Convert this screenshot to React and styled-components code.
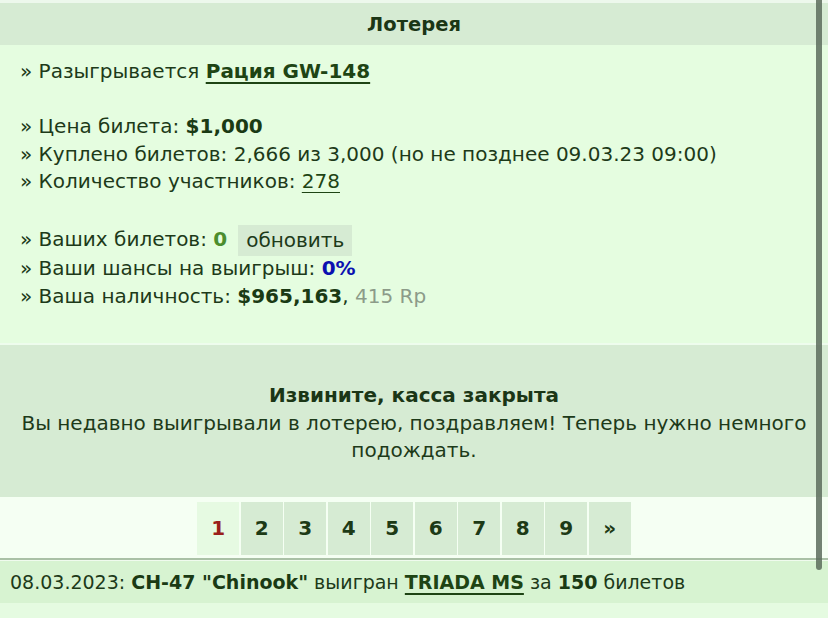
import React from "react";
import styled, { createGlobalStyle } from "styled-components";

const Global = createGlobalStyle`
  html, body { margin: 0; padding: 0; }
  body {
    background: #e5fbe1;
    font-family: "DejaVu Sans", Verdana, sans-serif;
    font-size: 20px;
    color: #1d3a19;
    overflow: hidden;
  }
`;

const Page = styled.div`
  width: 828px;
  height: 618px;
  padding-top: 3px;
  box-sizing: border-box;
  background: #edf8ec;
  position: relative;
`;

const Header = styled.div`
  height: 42px;
  background: #d6ebd3;
  display: flex;
  align-items: center;
  justify-content: center;
  font-weight: bold;
  font-size: 19.5px;
  color: #1b3616;
`;

const Body = styled.div`
  background: #e5fde0;
  padding: 13px 20px 33px;
  line-height: 27.5px;
  border-bottom: 2px solid #eefced;
`;

const Row = styled.div`
  white-space: nowrap;
`;

const RowTall = styled(Row)`
  height: 32px;
  line-height: 32px;
`;

const Gap = styled.div`
  height: 27.5px;
`;

const Strong = styled.b`
  color: ${(p) => p.$c || "#1a3a14"};
`;

const Link = styled.a`
  color: #1e4414;
  font-weight: ${(p) => (p.$bold ? "bold" : "normal")};
  text-decoration: underline;
  text-decoration-thickness: ${(p) => (p.$bold ? "2px" : "1px")};
  text-underline-offset: 4px;
  cursor: pointer;
`;

const Muted = styled.span`
  color: #8c9b89;
`;

const Refresh = styled.span`
  display: inline-block;
  margin-left: 11px;
  padding: 0 8px;
  height: 31px;
  line-height: 31px;
  background: #d6ebd3;
  vertical-align: -1px;
`;

const Closed = styled.div`
  background: #d6ebd3;
  padding: 37px 10px 32px;
  text-align: center;
  line-height: 27.5px;
`;

const ClosedTitle = styled.div`
  font-weight: bold;
  color: #1b3616;
`;

const Pager = styled.div`
  background: #f5fff3;
  padding: 5px 0 3px;
  display: flex;
  justify-content: center;
  gap: 1.5px;
  border-bottom: 2px solid #aac1a6;
`;

const PageBtn = styled.a`
  width: 42px;
  height: 53px;
  display: flex;
  align-items: center;
  justify-content: center;
  font-weight: bold;
  background: ${(p) => (p.$active ? "#e6fae2" : "#d6ebd3")};
  color: ${(p) => (p.$active ? "#9a1f1b" : "#1d3a16")};
  cursor: pointer;
`;

const Footer = styled.div`
  background: #d7f3d1;
  height: 42px;
  padding: 0 10px;
  display: flex;
  align-items: center;
  white-space: nowrap;
  font-size: 19px;
  border-top: 1px solid #f0fbee;
`;

const Rest = styled.div`
  background: #e5fbe1;
  height: 15px;
`;

const Scroll = styled.div`
  position: absolute;
  top: -4px;
  right: 6px;
  width: 6px;
  height: 574px;
  border-radius: 3px;
  background: rgba(92, 108, 92, 0.85);
`;

const pages = ["1", "2", "3", "4", "5", "6", "7", "8", "9", "»"];

export default function App() {
  return (
    <>
      <Global />
      <Page>
        <Header>Лотерея</Header>
        <Body>
          <Row>
            » Разыгрывается <Link $bold>Рация GW-148</Link>
          </Row>
          <Gap />
          <Row>
            » Цена билета: <Strong>$1,000</Strong>
          </Row>
          <Row>» Куплено билетов: 2,666 из 3,000 (но не позднее 09.03.23 09:00)</Row>
          <Row>
            » Количество участников: <Link>278</Link>
          </Row>
          <Gap />
          <RowTall>
            » Ваших билетов: <Strong $c="#4b8d2e">0</Strong>
            <Refresh>обновить</Refresh>
          </RowTall>
          <Row>
            » Ваши шансы на выигрыш: <Strong $c="#0b10b0">0%</Strong>
          </Row>
          <Row>
            » Ваша наличность: <Strong>$965,163</Strong>, <Muted>415 Rp</Muted>
          </Row>
        </Body>
        <Closed>
          <ClosedTitle>Извините, касса закрыта</ClosedTitle>
          Вы недавно выигрывали в лотерею, поздравляем! Теперь нужно немного подождать.
        </Closed>
        <Pager>
          {pages.map((p, i) => (
            <PageBtn key={p} $active={i === 0}>
              {p}
            </PageBtn>
          ))}
        </Pager>
        <Footer>
          08.03.2023:&nbsp;<Strong>CH-47 "Chinook"</Strong>&nbsp;выигран&nbsp;
          <Link $bold>TRIADA MS</Link>&nbsp;за&nbsp;<Strong>150</Strong>&nbsp;билетов
        </Footer>
        <Rest />
        <Scroll />
      </Page>
    </>
  );
}
